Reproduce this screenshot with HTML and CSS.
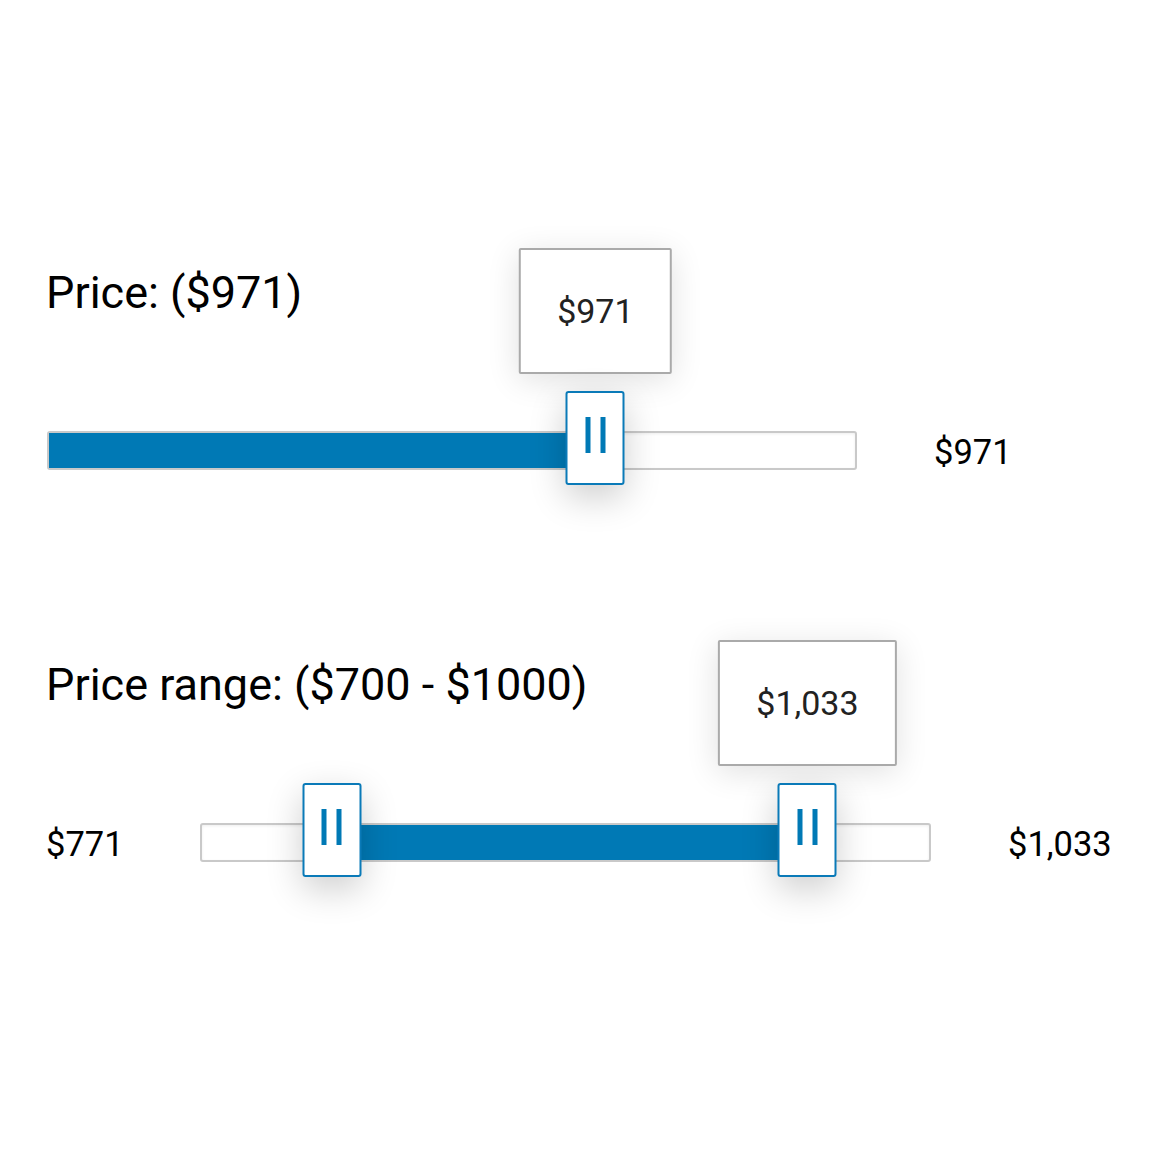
FILE: index.html
```html
<!DOCTYPE html>
<html>
<head>
    <title>Price sliders</title>
    <link rel="stylesheet" href="styles.css">
</head>
<body>
    <div class="page">
        <div class="section">
            <h2 class="title">Price: ($971)</h2>
            <div class="slider-row">
                <div class="slider slider-single">
                    <div class="track"></div>
                    <div class="fill" style="left: 2px; width: 66%;"></div>
                    <div class="tip" style="left: 67.7%;">$971</div>
                    <div class="thumb" style="left: 67.7%;"><span class="grip"></span></div>
                </div>
                <div class="value value-right">$971</div>
            </div>
        </div>

        <div class="section section-range">
            <h2 class="title">Price range: ($700 - $1000)</h2>
            <div class="slider-row">
                <div class="value value-left">$771</div>
                <div class="slider slider-range">
                    <div class="track"></div>
                    <div class="fill" style="left: 18%; width: 65.1%;"></div>
                    <div class="thumb" style="left: 18%;"><span class="grip"></span></div>
                    <div class="tip" style="left: 83.1%;">$1,033</div>
                    <div class="thumb" style="left: 83.1%;"><span class="grip"></span></div>
                </div>
                <div class="value value-right">$1,033</div>
            </div>
        </div>
    </div>
</body>
</html>
```

FILE: styles.css
```css
body {
    margin: 0;
    min-height: 1150px;
    background: #fff;
    font-family: Roboto, "Liberation Sans", sans-serif;
    color: #000;
}

.page {
    padding: 267px 0 260px 46px;
}

.title {
    margin: 0;
    font-size: 45px;
    font-weight: 400;
    line-height: 52px;
}

.slider-row {
    display: flex;
    align-items: center;
    height: 39px;
    margin-top: 112px;
}

.section-range {
    margin-top: 189px;
}

.slider {
    position: relative;
    height: 39px;
}

.slider-single {
    width: 810px;
    margin-left: 1px;
}

.slider-range {
    width: 731px;
}

.track {
    height: 39px;
    box-sizing: border-box;
    border: 2px solid #c9c9c9;
    border-radius: 3px;
    background: #fff;
    box-shadow: inset 0 1px 3px rgba(0, 0, 0, 0.07);
}

.fill {
    position: absolute;
    top: 2px;
    bottom: 2px;
    background: #0079b5;
}

.thumb {
    position: absolute;
    z-index: 2;
    top: -40px;
    width: 59px;
    height: 94px;
    box-sizing: border-box;
    transform: translateX(-50%);
    border: 2px solid #0a7ab8;
    border-radius: 3px;
    background: #fff;
    box-shadow: 0 12px 36px rgba(0, 0, 0, 0.2);
    display: flex;
    justify-content: center;
    padding-top: 24px;
}

.grip {
    width: 10px;
    height: 36px;
    border-left: 5px solid #0079b5;
    border-right: 5px solid #0079b5;
    box-sizing: content-box;
}

.tip {
    position: absolute;
    z-index: 2;
    bottom: 96px;
    transform: translateX(-50%);
    padding: 36px 36px;
    border: 2px solid #aaa;
    border-radius: 2px;
    background: #fff;
    font-size: 34px;
    line-height: 50px;
    color: #222;
    white-space: nowrap;
    box-shadow: 0 6px 32px rgba(0, 0, 0, 0.12);
}

.value {
    font-size: 34.5px;
    line-height: 39px;
    margin-top: 3px;
}

.value-right {
    margin-left: 77px;
}

.value-left {
    width: 154px;
}
```
